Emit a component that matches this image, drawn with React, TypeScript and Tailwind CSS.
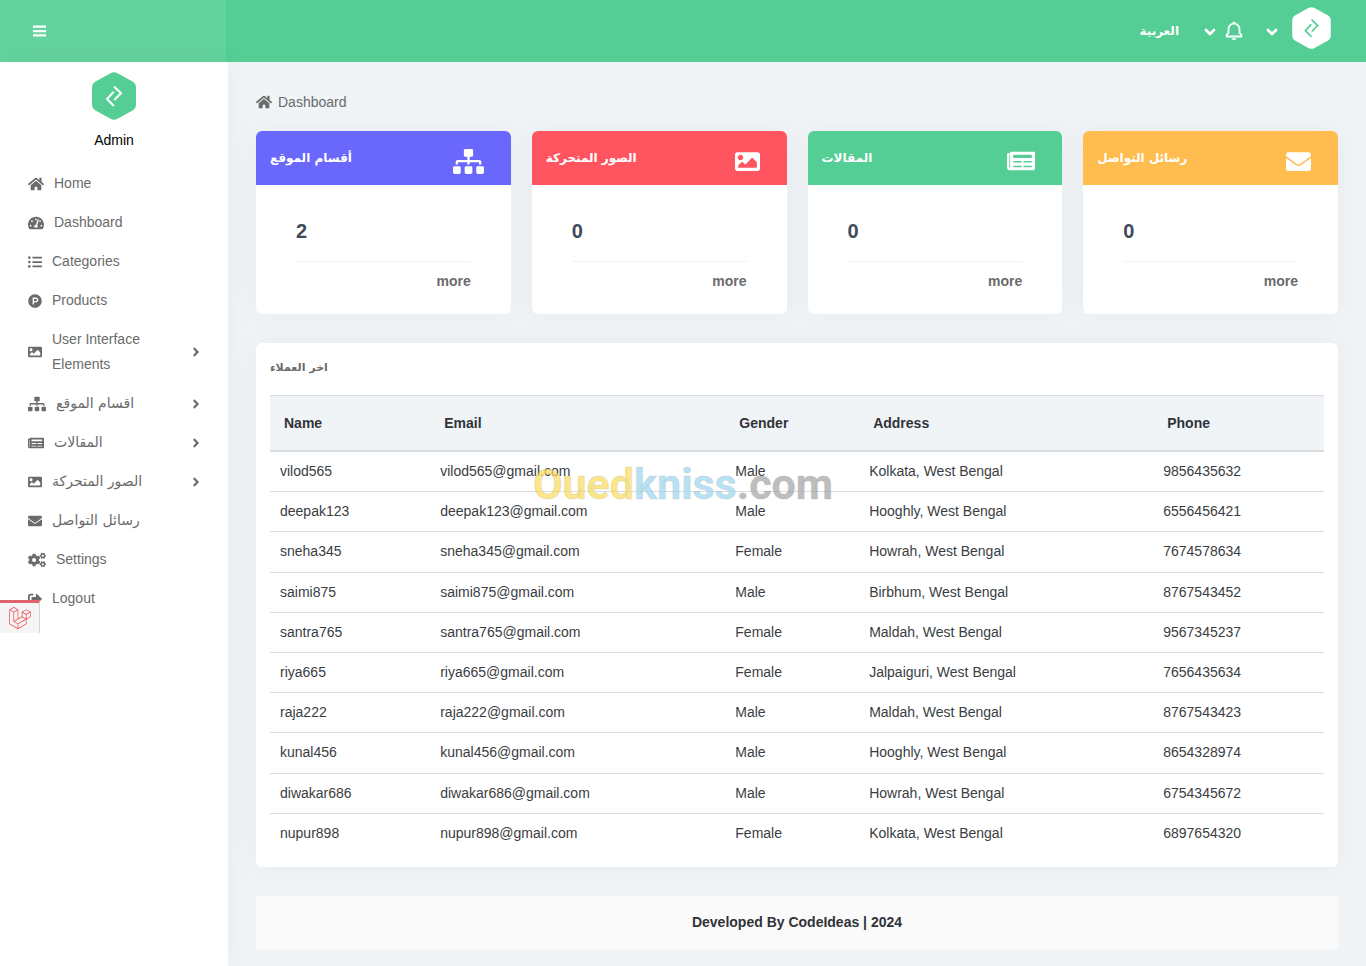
import type { IconType } from "react-icons";
import {
  FaAngleRight,
  FaCogs,
  FaEnvelope,
  FaHome,
  FaImage,
  FaLaravel,
  FaListUl,
  FaNewspaper,
  FaProductHunt,
  FaSignOutAlt,
  FaSitemap,
  FaTachometerAlt,
} from "react-icons/fa";
import { BiBell } from "react-icons/bi";
import { FiChevronDown } from "react-icons/fi";

type MenuItem = { label: string; icon: IconType; size: number; nested?: boolean; arabic?: boolean };

const menu: MenuItem[] = [
  { label: "Home", icon: FaHome, size: 16 },
  { label: "Dashboard", icon: FaTachometerAlt, size: 16 },
  { label: "Categories", icon: FaListUl, size: 14 },
  { label: "Products", icon: FaProductHunt, size: 14 },
  { label: "User Interface Elements", icon: FaImage, size: 14, nested: true },
  { label: "اقسام الموقع", icon: FaSitemap, size: 18, nested: true, arabic: true },
  { label: "المقالات", icon: FaNewspaper, size: 16, nested: true, arabic: true },
  { label: "الصور المتحركة", icon: FaImage, size: 14, nested: true, arabic: true },
  { label: "رسائل التواصل", icon: FaEnvelope, size: 14, arabic: true },
  { label: "Settings", icon: FaCogs, size: 18 },
  { label: "Logout", icon: FaSignOutAlt, size: 14 },
];

const cards = [
  { title: "أقسام الموقع", value: 2, icon: FaSitemap, size: 31, color: "bg-[#6a67fc]" },
  { title: "الصور المتحركة", value: 0, icon: FaImage, size: 25, color: "bg-[#ff5560]" },
  { title: "المقالات", value: 0, icon: FaNewspaper, size: 28, color: "bg-[#55ce96]" },
  { title: "رسائل التواصل", value: 0, icon: FaEnvelope, size: 25, color: "bg-[#ffbd4f]" },
];

const customers = [
  ["vilod565", "vilod565@gmail.com", "Male", "Kolkata, West Bengal", "9856435632"],
  ["deepak123", "deepak123@gmail.com", "Male", "Hooghly, West Bengal", "6556456421"],
  ["sneha345", "sneha345@gmail.com", "Female", "Howrah, West Bengal", "7674578634"],
  ["saimi875", "saimi875@gmail.com", "Male", "Birbhum, West Bengal", "8767543452"],
  ["santra765", "santra765@gmail.com", "Female", "Maldah, West Bengal", "9567345237"],
  ["riya665", "riya665@gmail.com", "Female", "Jalpaiguri, West Bengal", "7656435634"],
  ["raja222", "raja222@gmail.com", "Male", "Maldah, West Bengal", "8767543423"],
  ["kunal456", "kunal456@gmail.com", "Male", "Hooghly, West Bengal", "8654328974"],
  ["diwakar686", "diwakar686@gmail.com", "Male", "Howrah, West Bengal", "6754345672"],
  ["nupur898", "nupur898@gmail.com", "Female", "Kolkata, West Bengal", "6897654320"],
];

function Logo({ className, mark }: { className: string; mark: string }) {
  return (
    <svg viewBox="0 0 44 48" className={className} aria-hidden="true">
      <path
        fill="currentColor"
        d="M18.5 1.2a7 7 0 0 1 7 0l15 8.2A7 7 0 0 1 44 15.5v17a7 7 0 0 1-3.5 6.1l-15 8.2a7 7 0 0 1-7 0l-15-8.2A7 7 0 0 1 0 32.5v-17a7 7 0 0 1 3.5-6.1z"
      />
      <path
        fill="none"
        stroke={mark}
        strokeWidth="2"
        d="M22 14.500 29 21.200 22.300 28M22 34 15 27 21.700 19.800"
      />
    </svg>
  );
}

function BarsIcon() {
  return (
    <svg viewBox="0 0 13 12" className="h-3 w-[13px]" fill="currentColor" aria-hidden="true">
      <path d="M0 .5h13v2.300H0zM0 4.900h13v2.300H0zM0 9.300h13v2.300H0z" />
    </svg>
  );
}

function Header() {
  return (
    <header className="flex h-[62px] bg-[#55ce96] text-white">
      <div className="flex w-[226px] shrink-0 items-center bg-[#63d39f] pl-[33px]">
        <button type="button" aria-label="Toggle menu">
          <BarsIcon />
        </button>
      </div>
      <div className="flex flex-1 items-center justify-end pr-[35px]">
        <button type="button" className="flex items-center gap-[23px] font-['DejaVu_Sans',sans-serif] text-xs font-bold">
          <span lang="ar" dir="rtl">العربية</span>
          <FiChevronDown size={16} strokeWidth={4} className="mt-0.5" />
        </button>
        <button type="button" aria-label="Notifications" className="ml-[5px] flex items-center gap-[19px]">
          <BiBell size={22} />
          <FiChevronDown size={16} strokeWidth={4} className="mt-0.5" />
        </button>
        <button type="button" aria-label="Account" className="mb-1.5 ml-3">
          <Logo className="h-[42px] w-[39px]" mark="#55ce96" />
        </button>
      </div>
    </header>
  );
}

function Sidebar() {
  return (
    <aside className="w-[228px] shrink-0 bg-white pt-2.5 shadow-[0_0_28px_rgba(82,85,90,0.06)]">
      <div className="flex flex-col items-center">
        <Logo className="h-12 w-11 text-[#55ce96]" mark="#ffffff" />
        <p className="mt-2.5 leading-5 text-black">Admin</p>
      </div>
      <nav className="mt-3.5">
        <ul>
          {menu.map(({ label, icon: Icon, size, nested, arabic }) => (
            <li key={label}>
              <a href="#" className="flex items-center py-[7px] pr-[25px] pl-7 leading-[25px]">
                <Icon size={size} className="shrink-0" />
                <span
                  lang={arabic ? "ar" : undefined}
                  className={arabic ? "ml-2.5 font-['DejaVu_Sans',sans-serif] text-sm leading-[25px]" : "mr-8 ml-2.5"}
                >
                  {label}
                </span>
                {nested && <FaAngleRight size={14} className="ml-auto shrink-0" />}
              </a>
            </li>
          ))}
        </ul>
      </nav>
    </aside>
  );
}

function StatCards() {
  return (
    <section className="mt-[19px] grid grid-cols-4 gap-[21px]">
      {cards.map(({ title, value, icon: Icon, size, color }) => (
        <article key={title} className="overflow-hidden rounded-md bg-white shadow-[0_0_28px_rgba(82,85,90,0.06)]">
          <div className={`flex h-[54px] items-center justify-between pr-[27px] pl-3.5 text-white ${color}`}>
            <h2 lang="ar" className="font-['DejaVu_Sans',sans-serif] text-xs font-bold">
              {title}
            </h2>
            <Icon size={size} className="mt-1.5" />
          </div>
          <div className="px-10 pt-8 pb-[21px]">
            <p className="border-b border-[#f1f2f4] pb-4 text-xl leading-7 font-bold text-[#404b5a]">{value}</p>
            <div className="pt-[7px] text-right leading-6">
              <a href="#" className="font-bold">more</a>
            </div>
          </div>
        </article>
      ))}
    </section>
  );
}

function Customers() {
  return (
    <section className="mt-[29px] rounded-md bg-white p-3.5 shadow-[0_0_28px_rgba(82,85,90,0.06)]">
      <h2 lang="ar" className="mb-4 font-['DejaVu_Sans',sans-serif] text-[11px] leading-[22px] font-bold">
        اخر العملاء
      </h2>
      <table className="h-[458px] w-full table-fixed border-collapse text-left text-[#3a3d42]">
        <colgroup>
          <col className="w-[15.2%]" />
          <col className="w-[28%]" />
          <col className="w-[12.7%]" />
          <col className="w-[27.9%]" />
          <col className="w-[16.2%]" />
        </colgroup>
        <thead>
          <tr className="border-t border-b-2 border-[#d9dde1] bg-[#f0f4f7]">
            {["Name", "Email", "Gender", "Address", "Phone"].map((name) => (
              <th key={name} scope="col" className="px-3.5 py-4 leading-[22px] font-bold text-[#303338]">
                {name}
              </th>
            ))}
          </tr>
        </thead>
        <tbody>
          {customers.map((row) => (
            <tr key={row[0]} className="border-b border-[#dadde1] last:border-b-0">
              {row.map((cell) => (
                <td key={cell} className="px-2.5 py-2.5 leading-[19px]">
                  {cell}
                </td>
              ))}
            </tr>
          ))}
        </tbody>
      </table>
    </section>
  );
}

export default function App() {
  return (
    <div className="relative flex min-h-screen flex-col bg-[#f0f4f7] font-['Liberation_Sans',Arial,sans-serif] text-sm text-[#6b6b6b]">
      <Header />
      <div className="flex flex-1">
        <Sidebar />
        <main className="min-w-0 flex-1 px-7 pt-[30px] pb-4">
          <div className="flex items-center gap-1.5 leading-5">
            <FaHome size={16} />
            <span>Dashboard</span>
          </div>
          <StatCards />
          <Customers />
          <footer className="mt-[29px] bg-[#fafafa] py-4 text-center leading-[21px] font-bold text-[#303338]">
            Developed By CodeIdeas | 2024
          </footer>
        </main>
      </div>
      <button
        type="button"
        aria-label="Debug bar"
        className="absolute top-[600px] left-0 flex h-[33px] w-10 items-center justify-center border-t-3 border-r border-t-[#e0626a] border-r-[#d5d5d5] bg-[#f5f5f5] text-[#e8474c]"
      >
        <FaLaravel size={22} />
      </button>
      <div className="pointer-events-none absolute inset-x-0 top-[459px] text-center font-[Roboto,sans-serif] text-[43px] leading-[50px] font-bold opacity-70 [-webkit-text-stroke:1px_rgba(120,120,120,0.2)]">
        <span className="text-[#fbdc5c]">Oued</span>
        <span className="text-[#9bd6ef]">kniss</span>
        <span className="text-[#a3a3a3]">.com</span>
      </div>
    </div>
  );
}
